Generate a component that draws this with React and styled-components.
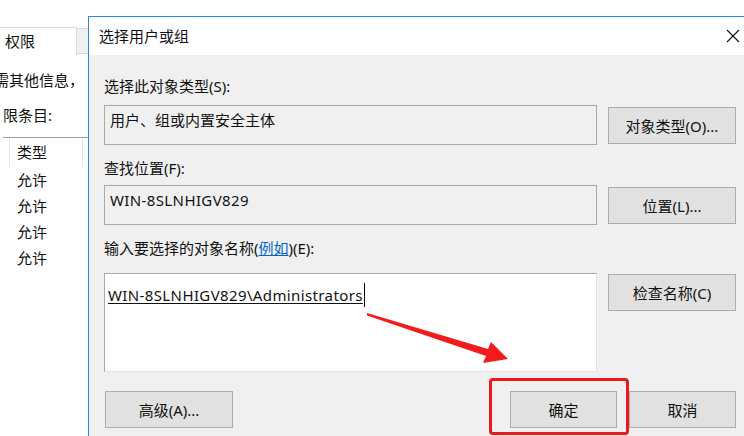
import React from "react";
import styled, { createGlobalStyle } from "styled-components";

const GlobalStyle = createGlobalStyle`
  html, body {
    margin: 0;
    padding: 0;
    background: #ffffff;
  }
  body {
    font-family: "Noto Sans", "Noto Sans CJK SC", sans-serif;
    font-size: 15px;
    color: #111111;
  }
`;

const Screen = styled.div`
  position: relative;
  display: flex;
  align-items: flex-start;
  width: 744px;
  height: 436px;
  overflow: hidden;
  background: #ffffff;
`;

/* window behind the dialog */
const BackPanel = styled.div`
  flex: none;
  width: 88px;
  display: flex;
  flex-direction: column;
  overflow: hidden;
`;

const TabStrip = styled.div`
  display: flex;
  align-items: flex-start;
  margin-top: 27px;
  height: 28px;
`;

const Tab = styled.div`
  box-sizing: border-box;
  flex: ${(p) => (p.$active ? "none" : "1")};
  width: ${(p) => (p.$active ? "77px" : "auto")};
  height: ${(p) => (p.$active ? "28px" : "26px")};
  margin-top: ${(p) => (p.$active ? "0" : "1px")};
  padding-left: 5px;
  line-height: 26px;
  background: ${(p) => (p.$active ? "#ffffff" : "#f0f0f0")};
  border-top: 1px solid #d9d9d9;
  border-right: ${(p) => (p.$active ? "1px solid #d9d9d9" : "none")};
  border-bottom: ${(p) => (p.$active ? "none" : "1px solid #d9d9d9")};
  white-space: nowrap;
`;

const InfoBlock = styled.div`
  margin-top: 8px;
`;

const InfoLine = styled.div`
  line-height: 35px;
  white-space: nowrap;
  margin-left: ${(p) => p.$shift}px;
`;

const ListBox = styled.div`
  margin: 4px 0 0 3px;
  border-top: 1px solid #a0a0a0;
`;

const ListHeader = styled.div`
  box-sizing: border-box;
  width: 74px;
  height: 29px;
  margin-left: 6px;
  padding-left: 7px;
  line-height: 29px;
  border-left: 1px solid #e5e5e5;
  border-right: 1px solid #e5e5e5;
`;

const ListRow = styled.div`
  padding-left: 14px;
  line-height: 26px;
`;

/* the dialog */
const Dialog = styled.div`
  position: relative;
  flex: none;
  box-sizing: border-box;
  width: 660px;
  height: 420px;
  margin-top: 16px;
  border-top: 1px solid #2b88d8;
  border-left: 1px solid #2b88d8;
  display: flex;
  flex-direction: column;
  background: #f0f0f0;
`;

const TitleBar = styled.div`
  display: flex;
  align-items: center;
  height: 38px;
  padding: 0 8px 0 10px;
  background: #ffffff;
`;

const Title = styled.div`
  flex: 1;
  line-height: 20px;
`;

const Body = styled.div`
  display: flex;
  flex-direction: column;
  padding: 21px 0 0 15px;
`;

const Label = styled.div`
  line-height: 20px;
  margin-top: ${(p) => p.$top || 0}px;
  margin-bottom: ${(p) => p.$bottom || 0}px;
  white-space: nowrap;
`;

const Link = styled.span`
  color: #0066cc;
  text-decoration: underline;
`;

const Row = styled.div`
  display: flex;
  align-items: ${(p) => (p.$top ? "flex-start" : "center")};
  gap: 11px;
`;

const Field = styled.div`
  box-sizing: border-box;
  width: 493px;
  height: ${(p) => (p.$tall ? "99px" : "40px")};
  padding: ${(p) => (p.$tall ? "9px 3px" : "4px 5px")};
  line-height: 20px;
  background: ${(p) => (p.$editable ? "#ffffff" : "#f0f0f0")};
  border: 1px solid #a9a9a9;
  border-right-color: ${(p) => (p.$editable ? "#e3e3e3" : "#a9a9a9")};
  border-bottom-color: ${(p) => (p.$editable ? "#e3e3e3" : "#a9a9a9")};
  white-space: nowrap;
`;

const Latin = styled.span`
  letter-spacing: 0.38px;
  text-decoration: ${(p) => (p.$underline ? "underline" : "none")};
  text-underline-offset: 2px;
`;

const Caret = styled.span`
  display: inline-block;
  width: 1px;
  height: 24px;
  margin-left: 1px;
  vertical-align: -6px;
  background: #000000;
`;

const Button = styled.div`
  box-sizing: border-box;
  flex: none;
  width: ${(p) => p.$w || 128}px;
  height: 37px;
  margin-top: ${(p) => p.$mt || 0}px;
  margin-left: ${(p) => p.$ml || 0}px;
  display: flex;
  align-items: center;
  justify-content: center;
  background: #e1e1e1;
  border: 1px solid #adadad;
  white-space: nowrap;
`;

const Footer = styled.div`
  display: flex;
  justify-content: space-between;
  width: 632px;
  margin-top: 19px;
`;

const FooterGroup = styled.div`
  display: flex;
  gap: 12px;
`;

const Highlight = styled.div`
  position: absolute;
  left: 400px;
  top: 361px;
  width: 140px;
  height: 57px;
  box-sizing: border-box;
  border: 3px solid #ea1a1a;
  border-radius: 4px;
`;

const ArrowLayer = styled.svg`
  position: absolute;
  left: 0;
  top: 0;
  pointer-events: none;
`;

const CloseIcon = () => (
  <svg width="14" height="14" viewBox="0 0 14 14">
    <path d="M1 1 L13 13 M13 1 L1 13" stroke="#111" strokeWidth="1.1" fill="none" />
  </svg>
);

export default function App() {
  return (
    <>
      <GlobalStyle />
      <Screen>
        <BackPanel>
          <TabStrip>
            <Tab $active>权限</Tab>
            <Tab />
          </TabStrip>
          <InfoBlock>
            <InfoLine $shift={-6}>需其他信息，</InfoLine>
            <InfoLine $shift={3}>限条目:</InfoLine>
          </InfoBlock>
          <ListBox>
            <ListHeader>类型</ListHeader>
            {["允许", "允许", "允许", "允许"].map((t, i) => (
              <ListRow key={i}>{t}</ListRow>
            ))}
          </ListBox>
        </BackPanel>

        <Dialog>
          <TitleBar>
            <Title>选择用户或组</Title>
            <CloseIcon />
          </TitleBar>
          <Body>
            <Label $bottom={9}>选择此对象类型(S):</Label>
            <Row>
              <Field>用户、组或内置安全主体</Field>
              <Button>对象类型(O)...</Button>
            </Row>

            <Label $top={13} $bottom={7}>查找位置(F):</Label>
            <Row>
              <Field>
                <Latin>WIN-8SLNHIGV829</Latin>
              </Field>
              <Button>位置(L)...</Button>
            </Row>

            <Label $top={13} $bottom={15}>
              输入要选择的对象名称(<Link>例如</Link>)(E):
            </Label>
            <Row $top>
              <Field $tall $editable>
                <Latin $underline>WIN-8SLNHIGV829\Administrators</Latin>
                <Caret />
              </Field>
              <Button $mt={1}>检查名称(C)</Button>
            </Row>

            <Footer>
              <Button $ml={1}>高级(A)...</Button>
              <FooterGroup>
                <Button $w={107}>确定</Button>
                <Button $w={107}>取消</Button>
              </FooterGroup>
            </Footer>
          </Body>
          <Highlight />
        </Dialog>

        <ArrowLayer width="744" height="436" viewBox="0 0 744 436">
          <polygon
            points="367,313 488,349 491,342 508,359 483,363 486,356 367,315.5"
            fill="#f21c1c"
          />
        </ArrowLayer>
      </Screen>
    </>
  );
}
